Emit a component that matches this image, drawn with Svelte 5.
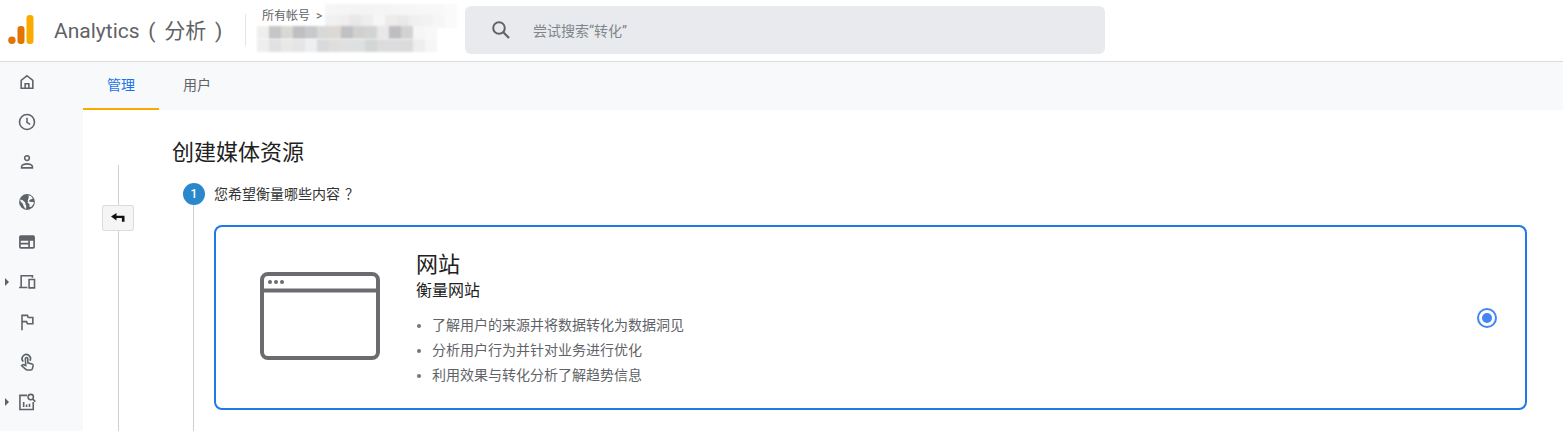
<script>
  const nav = [
    { id: 'home', d: 'M12 4.500l7 5.500v9.500h-14v-9.500z M9.800 19.500v-5.500h4.400v5.500', arrow: false },
    { id: 'clock', d: 'M12 3a9 9 0 1 0 0 18a9 9 0 0 0 0-18z M12 7v5.500l3.800 2.400', arrow: false },
    { id: 'person', d: 'M12 4.500a2.800 2.800 0 1 0 0 5.600a2.800 2.800 0 0 0 0-5.600z M5.500 19v-1.500c0-2 4-3.300 6.500-3.300s6.500 1.300 6.500 3.300v1.500z', arrow: false },
    { id: 'globe', arrow: false },
    { id: 'display', d: 'M4.500 5h15a1 1 0 0 1 1 1v12a1 1 0 0 1-1 1h-15a1 1 0 0 1-1-1v-12a1 1 0 0 1 1-1z M3.500 9.500h17 M14.500 9.500v9.500 M3.500 14h11', arrow: false },
    { id: 'devices', d: 'M18.500 7v-2.500h-13.500v14 M2.500 18.500h10 M14.500 9h6.500v10h-6.500z', arrow: true },
    { id: 'flag', d: 'M6 22v-18h6.500l1 2.500h5.500v7.500h-6.500l-1-2.500h-5', arrow: false },
    { id: 'touch', arrow: false },
    { id: 'report', arrow: true }
  ];
  const bullets = [
    '了解用户的来源并将数据转化为数据洞见',
    '分析用户行为并针对业务进行优化',
    '利用效果与转化分析了解趋势信息'
  ];
  const mosaicRows = [
    { left: 79, top: 4, cells: ['#f6f6f6','#f5f5f5','#f4f4f4','#f4f4f4','#f5f5f5','#f5f5f5','#f6f6f6','#f7f7f7','#f7f7f7','#f8f8f8','#fafafa'] },
    { left: 79, top: 15, cells: ['#f2f1f1','#f0eeee','#e9e7e7','#ededed','#f6f6f6','#eeecea','#ebe9e8','#f0f0f0','#f2f2f2','#f6f6f6','#fafafa'] },
    { left: 11, top: 26, cells: ['#eeeeec','#c6c6c8','#d8d8d4','#bfbfc1','#c8c9cb','#d8d8d8','#dcd8d4','#c0c1c3','#d0d1cf','#d2d4d2','#e8e8e8','#bebec0','#d2d2d2','#f6f6f6','#f8f8f8'] },
    { left: 11, top: 39, cells: ['#eeeeee','#e0e1e2','#e8e8e8','#e4e5e6','#eeeff0','#d9dadb','#e0dedc','#dfe0e1','#dde0e0','#d2d6d4','#dcdcdc','#dadcde','#dddbda','#eceef0','#f6f6f6'] }
  ];
</script>

<div class="page">
  <header class="topbar">
    <svg class="logo" viewBox="0 0 26 30" width="26" height="30" aria-hidden="true">
      <rect x="18.500" y="0" width="7" height="29" rx="3.200" fill="#f9ab00" />
      <rect x="9.500" y="11" width="7" height="18" rx="3.200" fill="#e37400" />
      <circle cx="3.900" cy="25.300" r="3.700" fill="#e37400" />
    </svg>
    <div class="brand">Analytics ( 分析 )</div>
    <div class="divider"></div>
    <div class="account">
      <div class="crumb">所有帐号<span class="chev">&gt;</span></div>
      {#each mosaicRows as row}
        <div class="mosaic" style="left:{row.left}px;top:{row.top}px">
          {#each row.cells as c}<span style="background:{c}"></span>{/each}
        </div>
      {/each}
    </div>
    <div class="search">
      <svg viewBox="0 0 24 24" width="24" height="24" aria-hidden="true">
        <circle cx="10" cy="10" r="5.800" fill="none" stroke="#5f6368" stroke-width="2" />
        <path d="M14.300 14.300L20 20" stroke="#5f6368" stroke-width="2.200" />
      </svg>
      <span>尝试搜索“转化”</span>
    </div>
  </header>

  <div class="body">
    <nav class="rail">
      {#each nav as item}
        <div class="rail-item">
          {#if item.arrow}<span class="tri"></span>{/if}
          <svg viewBox="0 0 24 24" width="20" height="20" aria-hidden="true" class="ic">
            {#if item.id === 'globe'}
              <circle cx="12" cy="12" r="9.500" fill="#5f6368" />
              <path d="M4 9l3 1 3 3 0 2 1 1 0 4-1 0-2-3-1-3-3-3z M14 4l3 1 2 3-3 1-2 2 3 1 3 0 0 2-3 4-2 0 0-3-2-2 0-3 1-3z" fill="#f8f9fa" />
            {:else if item.id === 'touch'}
              <path d="M7.500 11.500a5 5 0 1 1 8-1" fill="none" stroke="#5f6368" stroke-width="2" />
              <path d="M10 8a1.500 1.500 0 0 1 3 0v5l5 1.500c1 .4 1.500 1 1.300 2l-.8 3.500c-.2 1-1 1.500-2 1.500h-4.500c-.6 0-1-.2-1.400-.6l-5-4.400 1-1c.4-.4 1-.5 1.500-.3l2.400 1z" fill="none" stroke="#5f6368" stroke-width="1.900" />
            {:else if item.id === 'report'}
              <path d="M12 4H3.500v17h16v-9" fill="none" stroke="#5f6368" stroke-width="1.900" />
              <path d="M8 18v-6 M11.500 18v-3 M15 18v-4" stroke="#5f6368" stroke-width="1.900" />
              <circle cx="16.500" cy="6" r="3.200" fill="none" stroke="#5f6368" stroke-width="1.900" />
              <path d="M19 8.500l3 3" stroke="#5f6368" stroke-width="1.900" />
            {:else if item.id === 'display'}
              <path d={item.d} fill="none" stroke="#5f6368" stroke-width="2" />
              <rect x="3.500" y="5" width="17" height="4.500" fill="#5f6368" />
            {:else}
              <path d={item.d} fill="none" stroke="#5f6368" stroke-width="1.900" />
            {/if}
          </svg>
        </div>
      {/each}
    </nav>

    <main class="main">
      <div class="tabs">
        <div class="tab active">管理</div>
        <div class="tab">用户</div>
      </div>

      <div class="content">
        <div class="back-col">
          <button class="back" aria-label="返回">
            <svg viewBox="0 0 16 12" width="16" height="12" aria-hidden="true">
              <path d="M1 4.500L6.500 1v2.700h8v6h-2.600V6H6.500v2.500z" fill="#111" />
            </svg>
          </button>
        </div>
        <div class="form">
          <h1>创建媒体资源</h1>
          <div class="step-head">
            <span class="num">1</span>
            <span class="q">您希望衡量哪些内容<span class="qm">？</span></span>
          </div>
          <div class="step-body">
            <div class="card">
              <svg class="browser" viewBox="0 0 120 88" width="120" height="88" aria-hidden="true">
                <rect x="2" y="2" width="116" height="84" rx="6" fill="none" stroke="#6a6c70" stroke-width="4" />
                <path d="M2 18.500h116" stroke="#6a6c70" stroke-width="4" />
                <circle cx="10" cy="10" r="2" fill="#6a6c70" />
                <circle cx="16" cy="10" r="2" fill="#6a6c70" />
                <circle cx="22" cy="10" r="2" fill="#6a6c70" />
              </svg>
              <div class="info">
                <div class="title">网站</div>
                <div class="sub">衡量网站</div>
                <ul>
                  {#each bullets as b}<li>{b}</li>{/each}
                </ul>
              </div>
              <span class="radio"><span></span></span>
            </div>
          </div>
        </div>
      </div>
    </main>
  </div>
</div>

<style>
  :global(body) { margin: 0; background: #fff; overflow: hidden; }
  .page {
    width: 1563px; height: 431px; overflow: hidden;
    font-family: Roboto, "Noto Sans CJK SC", sans-serif;
    color: #202124;
  }
  .topbar {
    height: 61px; border-bottom: 1px solid #dadce0; background: #fff;
    display: flex; align-items: center; box-sizing: content-box;
  }
  .logo { margin-left: 8px; margin-top: -1px; flex: none; }
  .brand { margin-left: 20px; width: 192px; flex: none; font-size: 21px; word-spacing: 3.500px; color: #5f6368; white-space: nowrap; margin-top: -3px; }
  .divider { width: 1px; height: 32px; background: #e4e5e7; margin-left: -1px; margin-top: -1px; flex: none; }
  .account { position: relative; width: 219px; height: 61px; flex: none; }
  .crumb { position: absolute; left: 16px; top: 8px; font-size: 12px; line-height: 16px; color: #5f6368; white-space: nowrap; z-index: 1; }
  .chev { margin-left: 6px; }
  .mosaic { position: absolute; display: flex; filter: blur(0.8px); }
  .mosaic span { width: 12px; height: 13px; flex: none; }
  .search {
    width: 640px; height: 48px; margin-top: -1px; flex: none; border-radius: 6px;
    background: #e8eaed; display: flex; align-items: center; padding-left: 24px; box-sizing: border-box;
    font-size: 14px; color: #80868b; gap: 20px;
  }
  .body { display: flex; height: 369px; }
  .rail { width: 83px; flex: none; background: #f8f9fa; box-sizing: border-box; }
  .rail-item {
    position: relative; height: 40px; display: flex; align-items: center; justify-content: center;
    padding-right: 29px; box-sizing: border-box;
  }
  .ic { flex: none; }
  .tri {
    position: absolute; left: 5px; top: 16px; width: 0; height: 0;
    border-left: 4px solid #5f6368; border-top: 4px solid transparent; border-bottom: 4px solid transparent;
  }
  .main { flex: 1; min-width: 0; display: flex; flex-direction: column; }
  .tabs { height: 48px; background: #f8f9fa; display: flex; flex: none; }
  .tab {
    width: 76px; display: flex; align-items: center; justify-content: center;
    font-size: 14px; color: #5f6368; box-sizing: border-box; padding-bottom: 4px;
  }
  .tab.active { color: #1a73e8; border-bottom: 2px solid #f9ab00; padding-bottom: 2px; }
  .content { flex: 1; display: flex; background: #fff; position: relative; }
  .back-col { width: 36px; padding-left: 19px; position: relative; flex: none; }
  .back-col::before {
    content: ""; position: absolute; left: 35px; top: 55px; bottom: 0; width: 1px; background: #cfcfcf;
  }
  .back {
    position: absolute; left: 19px; top: 95px; width: 32px; height: 26px; padding: 0;
    background: #f5f5f5; border: 1px solid #dcdcdc; border-radius: 2px;
    display: flex; align-items: center; justify-content: center;
  }
  .form { flex: 1; min-width: 0; padding-left: 34px; }
  h1 { margin: 29px 0 0; font-size: 22px; line-height: 28px; font-weight: 400; color: #212121; }
  .step-head { display: flex; align-items: center; margin: 16px 0 0 11px; height: 22px; }
  .num {
    width: 22px; height: 22px; border-radius: 50%; background: #2b87cb; color: #fff;
    font-size: 12px; font-weight: 500; display: flex; align-items: center; justify-content: center; flex: none;
  }
  .q { margin-left: 9px; font-size: 14px; color: #333; margin-top: -2px; }
  .qm { margin-left: 5px; }
  .step-body { margin-left: 21px; border-left: 1px solid #cfcfcf; padding: 20px 36px 30px 20px; }
  .card {
    height: 185px; box-sizing: border-box; border: 2px solid #1f78e8; border-radius: 8px;
    display: flex; align-items: flex-start; position: relative;
  }
  .browser { margin: 45px 0 0 44px; flex: none; }
  .info { margin-left: 36px; padding-top: 23px; }
  .title { font-size: 22px; line-height: 29px; color: #212121; }
  .sub { font-size: 16px; line-height: 22px; color: #212121; margin-top: 1px; }
  ul { list-style: none; margin: 11px 0 0; padding: 0; }
  li {
    font-size: 14px; line-height: 25px; color: #5f6368; padding-left: 16px; position: relative;
  }
  li::before {
    content: ""; position: absolute; left: 1px; top: 11px; width: 4px; height: 4px; border-radius: 50%; background: #757575;
  }
  .radio {
    position: absolute; right: 28px; top: 81px; width: 20px; height: 20px; box-sizing: border-box;
    border: 2px solid #4285f4; border-radius: 50%; display: flex; align-items: center; justify-content: center;
  }
  .radio span { width: 10px; height: 10px; border-radius: 50%; background: #4285f4; }
</style>
